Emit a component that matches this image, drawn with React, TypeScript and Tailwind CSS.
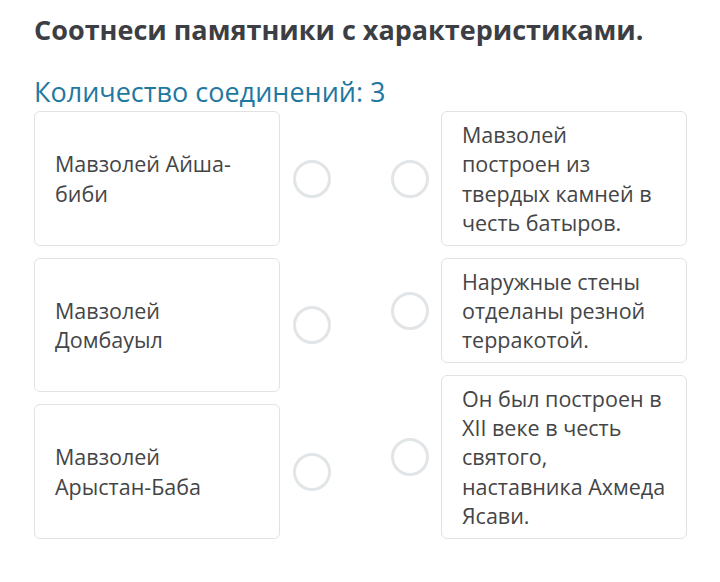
import React from 'react';

// line breaks follow the screenshot
const left = [
    { lines: ['Мавзолей Айша-', 'биби'], h: 'h-[135px]' },
    { lines: ['Мавзолей', 'Домбауыл'], h: 'h-[134px]' },
    { lines: ['Мавзолей', 'Арыстан-Баба'], h: 'h-[135px]' },
];

const right = [
    { lines: ['Мавзолей', 'построен из', 'твердых камней в', 'честь батыров.'], h: 'h-[135px]' },
    { lines: ['Наружные стены', 'отделаны резной', 'терракотой.'], h: 'h-[105px]' },
    { lines: ['Он был построен в', 'XII веке в честь', 'святого,', 'наставника Ахмеда', 'Ясави.'], h: 'h-[164px]' },
];

function Dot() {
    return <div className="w-[38px] h-[38px] shrink-0 rounded-full border-[3px] border-[#e2e5e7] bg-white" />;
}

function Card({ lines, h }: { lines: string[]; h: string }) {
    return (
        <div className={`${h} w-[246px] shrink-0 rounded-md border border-[#e2e2e2] bg-white pl-[20px] flex flex-col justify-center`}>
            {lines.map((l) => (
                <span key={l} className="block whitespace-nowrap text-[21.5px] leading-[29.3px] text-[#444546]">{l}</span>
            ))}
        </div>
    );
}

export default function App() {
    return (
        <div className="w-[720px] h-[582px] bg-white pl-[34px] pt-[11px]" style={{ fontFamily: '"Open Sans", sans-serif' }}>
            <h1 className="text-[27px] font-bold leading-[37px] text-[#3c3e43]">Соотнеси памятники с характеристиками.</h1>

            <h2 className="mt-[25px] text-[27px] leading-[37px] text-[#1f78a0]">Количество соединений: 3</h2>

            <div className="mt-[1px] flex gap-[60px]">
                {/* left column */}
                <div className="flex flex-col gap-3">
                    {left.map((item) => (
                        <div key={item.lines[0] + item.h} className="flex items-center gap-[13px]">
                            <Card lines={item.lines} h={item.h} />
                            <Dot />
                        </div>
                    ))}
                </div>

                {/* right column */}
                <div className="flex flex-col gap-3">
                    {right.map((item) => (
                        <div key={item.lines[0]} className="flex items-center gap-3">
                            <Dot />
                            <Card lines={item.lines} h={item.h} />
                        </div>
                    ))}
                </div>
            </div>
        </div>
    );
}
